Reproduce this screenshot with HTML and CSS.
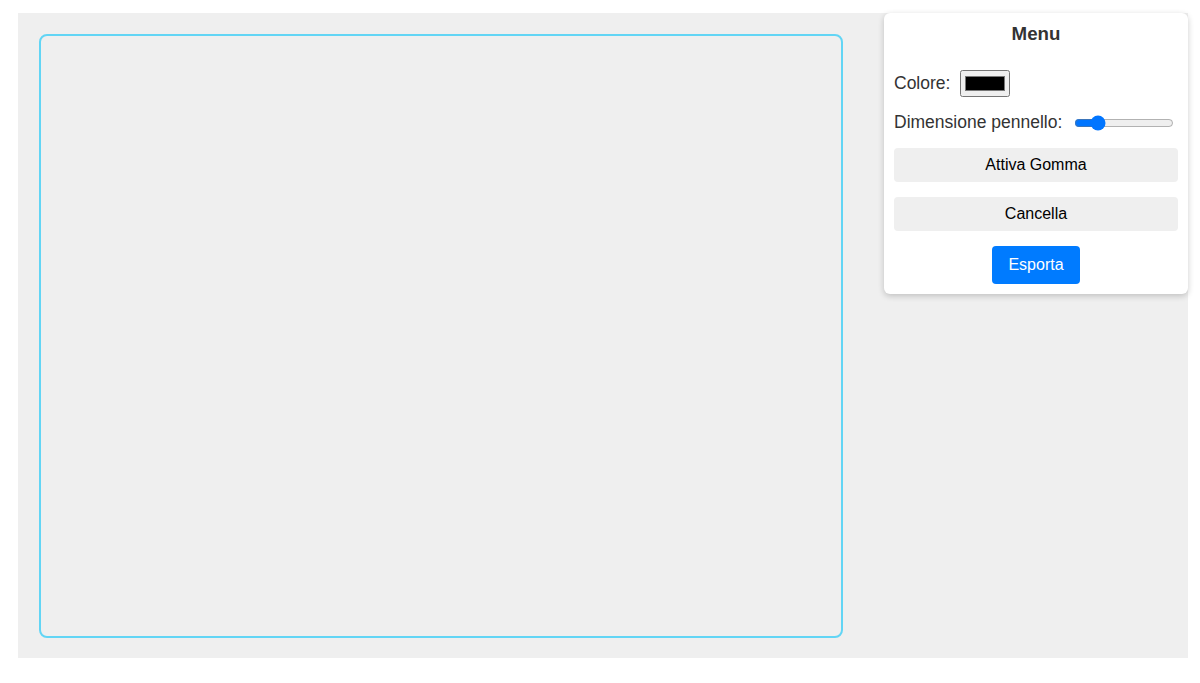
FILE: index.html
```html
<!DOCTYPE html>
<html lang="it">
<head>
    <meta charset="UTF-8">
    <meta name="viewport" content="width=device-width, initial-scale=1.0">
    <link rel="stylesheet" href="styles.css">
    <title>Lavagna</title>
</head>
<body>
    <div class="container">
        <canvas id="board" width="800" height="600"></canvas>

        <div class="menu">
            <h3>Menu</h3>
            <div class="control">
                <label for="colorPicker">Colore:</label>
                <input type="color" id="colorPicker" value="#000000">
            </div>
            <div class="control">
                <label for="brushSize">Dimensione pennello:</label>
                <input type="range" id="brushSize" min="1" max="50" value="10">
            </div>
            <button class="menu-btn" id="eraser">Attiva Gomma</button>
            <button class="menu-btn" id="clear">Cancella</button>
            <button class="export-btn" id="export">Esporta</button>
        </div>
    </div>
</body>
</html>
```

FILE: styles.css
```css
body {
    font-family: "Liberation Sans", Arial, sans-serif;
    margin: 0;
    background-color: #fff;
}

.container {
    display: flex;
    justify-content: space-between;
    align-items: flex-start;
    margin: 13px 12px 0 18px;
    padding-left: 21px;
    background-color: #efefef;
}

#board {
    display: block;
    margin: 21px 0 20px 0;
    border: 2px solid #62d5f5;
    border-radius: 8px;
}

.menu {
    width: 304px;
    box-sizing: border-box;
    padding: 10px;
    display: flex;
    flex-direction: column;
    gap: 15px;
    background-color: #fff;
    border-radius: 6px;
    box-shadow: 0 2px 6px rgba(0, 0, 0, 0.2);
}

.menu h3 {
    margin: 0 0 10px 0;
    text-align: center;
    color: #333;
}

.control {
    display: flex;
    align-items: center;
    font-size: 17.5px;
    color: #333;
}

.control label {
    margin-right: 10px;
}

.control input[type="color"] {
    margin: 0;
}

.control input[type="range"] {
    width: 100px;
    margin: 2px;
}

.menu-btn {
    padding: 8px;
    font-family: inherit;
    font-size: 16px;
    color: #000;
    background-color: #efefef;
    border: none;
    border-radius: 4px;
    cursor: pointer;
}

.menu-btn:hover {
    background-color: #e2e2e2;
}

.export-btn {
    align-self: center;
    padding: 10px 16px;
    font-family: inherit;
    font-size: 16px;
    color: #fff;
    background-color: #007bff;
    border: none;
    border-radius: 4px;
    cursor: pointer;
}
```
